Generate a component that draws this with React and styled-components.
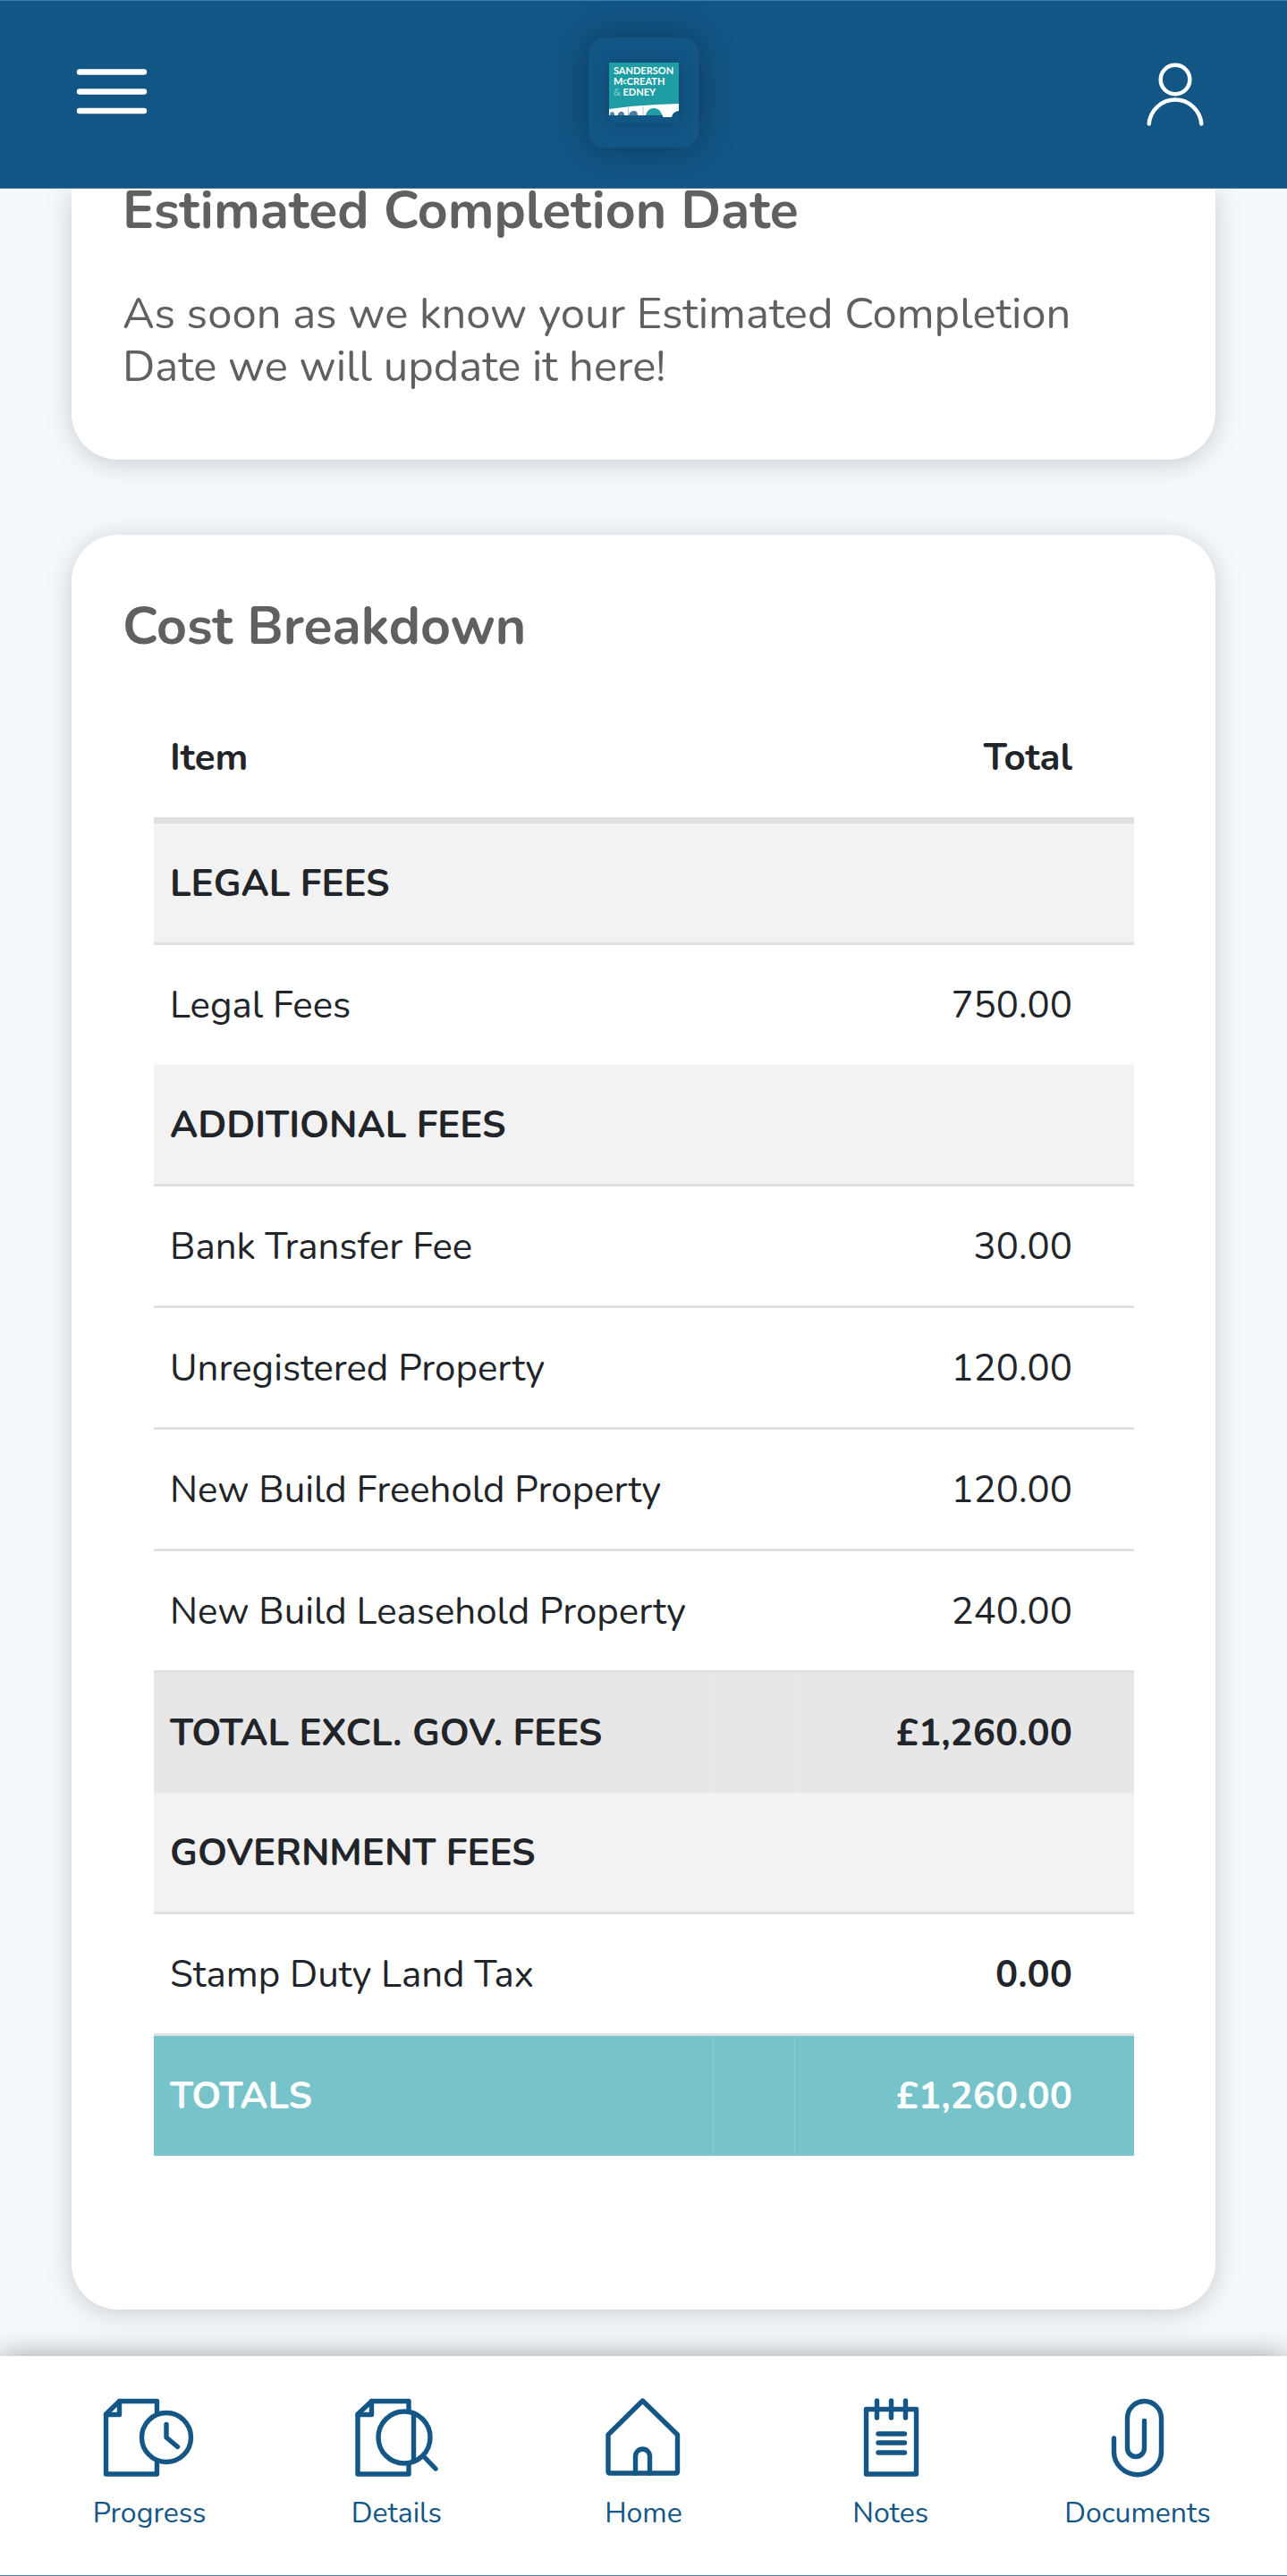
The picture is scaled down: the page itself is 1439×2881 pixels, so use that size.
import React from "react";
import styled, { createGlobalStyle, css } from "styled-components";

const GlobalStyle = createGlobalStyle`
  * {
    box-sizing: border-box;
  }
  body {
    margin: 0;
    background: #f5f9fc;
    font-family: Nunito, Lato, "Open Sans", sans-serif;
  }
`;

const Page = styled.div`
  display: flex;
  flex-direction: column;
  min-height: 100vh;
`;

const Header = styled.header`
  display: flex;
  align-items: center;
  justify-content: space-between;
  height: 211px;
  padding: 0 80px 5px;
  background: #125686;
  border-top: 1px solid #3f7cab;
  border-bottom: 1px solid #3f7499;
  position: sticky;
  top: 0;
  z-index: 2;
`;

const IconButton = styled.button`
  display: flex;
  width: 90px;
  height: 90px;
  padding: 0;
  border: 0;
  background: none;
  color: #ffffff;
`;

const LogoTile = styled.a`
  display: flex;
  align-items: center;
  justify-content: center;
  width: 123px;
  height: 123px;
  border-radius: 18px;
  background: #125686;
  box-shadow: 0 0 40px rgba(0, 0, 0, 0.32);

  svg {
    box-shadow: 0 0 18px rgba(0, 0, 0, 0.2);
  }
`;

const Main = styled.main`
  flex: 1;
  display: flex;
  flex-direction: column;
  gap: 84px;
  padding: 0 80px 52px;
`;

const Card = styled.section`
  padding: ${({ $scrolled }) => ($scrolled ? "0 57px 75px" : "78px 57px 78px")};
  border-radius: ${({ $scrolled }) => ($scrolled ? "0 0 52px 52px" : "52px")};
  background: #ffffff;
  box-shadow: 0 4px 30px rgba(0, 0, 0, 0.18);
`;

const CardTitle = styled.h2`
  margin: 0;
  font-size: 59px;
  font-weight: bold;
  line-height: 50px;
  color: #606060;
`;

const CardText = styled.p`
  margin: 60px 0 0;
  font-size: 49px;
  line-height: 59px;
  color: #606060;
`;

const TableWrap = styled.div`
  padding: 54px 34px 94px 35px;
`;

const CostTable = styled.table`
  width: 100%;
  table-layout: fixed;
  border-spacing: 0;
  font-size: 42px;
  line-height: 54px;
  color: #212429;

  th,
  td {
    height: 134px;
    padding: 2px 0 0 18px;
    text-align: left;
    font-weight: inherit;
  }
  th:last-child,
  td:last-child {
    padding-right: 69px;
    text-align: right;
  }
  thead th {
    height: 141px;
    border-bottom: 7px solid #e0e0e2;
    font-weight: bold;
  }
`;

const ItemCol = styled.col`
  width: 57%;
`;

const SpacerCol = styled.col`
  width: 91px;
`;

const rowKinds = {
  section: css`
    background: #f2f2f3;
    font-weight: bold;
  `,
  subtotal: css`
    background: #e7e7e7;
    font-weight: bold;
    td {
      border-left: 1px solid #ebebeb;
    }
  `,
  total: css`
    background: #76c3c9;
    color: #ffffff;
    font-weight: bold;
    td {
      border-left: 1px solid #8bccd2;
    }
  `,
};

const Row = styled.tr`
  ${({ $kind }) => rowKinds[$kind]}

  ${({ $line }) =>
    $line &&
    css`
      && th,
      && td {
        height: 136px;
        border-bottom: 3px solid #dfe0e3;
      }
    `}
`;

const Amount = styled.td`
  && {
    font-weight: ${({ $bold }) => ($bold ? "bold" : "inherit")};
  }
`;

const Nav = styled.nav`
  display: grid;
  grid-template-columns: repeat(5, 1fr);
  height: 246px;
  padding: 45px 29px 0;
  background: #ffffff;
  border-bottom: 1px solid #4b82ab;
  box-shadow: 0 0 30px rgba(0, 0, 0, 0.36);
  position: sticky;
  bottom: 0;
`;

const NavLink = styled.a`
  display: flex;
  flex-direction: column;
  align-items: center;
  gap: 19px;
  font-size: 32px;
  line-height: 40px;
  text-decoration: none;
  color: #145685;
`;

const MenuIcon = () => (
  <svg width="90" height="90" viewBox="0 0 90 90" fill="none" stroke="currentColor" strokeWidth="6.4" strokeLinecap="round">
    <path d="M9 22.500H81M9 44.500H81M9 66H81" />
  </svg>
);

const UserIcon = () => (
  <svg width="90" height="90" viewBox="0 0 90 90" fill="none" stroke="currentColor" strokeWidth="4.500" strokeLinecap="round">
    <circle cx="45" cy="31" r="16.300" />
    <path d="M15.700 80.500a29.400 29.400 0 0 1 58.600 0" />
  </svg>
);

const Logo = () => (
  <svg width="78" height="67" viewBox="0 0 78 67">
    <rect width="78" height="67" fill="#125686" />
    <path d="M0 0H78V52H0Z" fill="#1f9da4" />
    <path d="M0 52L24 49L52 47L78 46V54Q71 55 70 61H60V59H0Z" fill="#ffffff" />
    <path d="M1 59V57Q4 53 6 57V59ZM10 59V57Q14 52 17 57V59ZM22 59Q23 54 28 54Q32 54 32 59Z" fill="#4f7f9f" />
    <path d="M41 59Q43 51 50 51Q57 51 60 60L50 60Z" fill="#1f9da4" />
    <path d="M0 59H39L60 59V61H70V67H0Z" fill="#125686" />
    <path d="M21.500 50V59M38 49V59" stroke="#b8c4cc" strokeWidth="1" />
    <g fill="#ffffff" fontFamily="Lato, sans-serif" fontWeight="bold" fontSize="11">
      <text x="5" y="13">SANDERSON</text>
      <text x="5" y="25">
        M<tspan fontSize="9" dy="-1">c</tspan>
        <tspan dy="1">CREATH</tspan>
      </text>
      <text x="5" y="37">
        <tspan fontWeight="normal" fill="#8fd0d2">&amp;</tspan> EDNEY
      </text>
    </g>
  </svg>
);

const NavIcon = ({ children }) => (
  <svg width="104" height="92" viewBox="0 0 104 92" fill="none" stroke="currentColor" strokeWidth="5.400" strokeLinecap="round" strokeLinejoin="round" aria-hidden="true">
    {children}
  </svg>
);

const links = [
  {
    label: "Progress",
    icon: (
      <>
        <path d="M60.500 18V5.500H18.500L3.500 20V87H60.500V74" />
        <path d="M18.500 5.500V20.500H3.500" />
        <circle cx="71" cy="46" r="27.500" />
        <path d="M71 31.500V46L83.500 56.500" />
      </>
    ),
  },
  {
    label: "Details",
    icon: (
      <>
        <path d="M66 16V5.500H24.500L9 20V87H66V76" />
        <path d="M24.500 5.500V20.500H9" />
        <circle cx="61" cy="46" r="29" />
        <path d="M71.500 20V72M83 67.500L96 81" />
      </>
    ),
  },
  {
    label: "Home",
    icon: (
      <>
        <path d="M51.500 5L13 43V84Q13 86 15 86H88.500Q90.500 86 90.500 84V43Z" />
        <path d="M43.500 86V67a8 8 0 0 1 16 0V86" />
      </>
    ),
  },
  {
    label: "Notes",
    icon: (
      <>
        <path d="M24.500 14.500H80.500V87H24.500Z" />
        <path d="M36.500 5V24M52.500 5V24M68.500 5V24" />
        <path d="M38 42H67.500M38 52H67.500M38 63H67.500" />
      </>
    ),
  },
  {
    label: "Documents",
    icon: (
      <path d="M25.500 47V62a26.500 25.700 0 0 0 53 0V24.500a19 19 0 0 0 -38 0V58a9.500 9.500 0 0 0 19 0V27.500" />
    ),
  },
];

const costs = [
  { item: "LEGAL FEES", kind: "section", line: true },
  { item: "Legal Fees", total: "750.00" },
  { item: "ADDITIONAL FEES", kind: "section", line: true },
  { item: "Bank Transfer Fee", total: "30.00", line: true },
  { item: "Unregistered Property", total: "120.00", line: true },
  { item: "New Build Freehold Property", total: "120.00", line: true },
  { item: "New Build Leasehold Property", total: "240.00", line: true },
  { item: "TOTAL EXCL. GOV. FEES", total: "£1,260.00", kind: "subtotal" },
  { item: "GOVERNMENT FEES", kind: "section", line: true },
  { item: "Stamp Duty Land Tax", total: "0.00", bold: true, line: true },
  { item: "TOTALS", total: "£1,260.00", kind: "total" },
];

const CostRow = ({ item, total, kind, line, bold }) => (
  <Row $kind={kind} $line={line}>
    <th scope="row">{item}</th>
    <td />
    <Amount $bold={bold || kind}>{total}</Amount>
  </Row>
);

export default function App() {
  return (
    <Page>
      <GlobalStyle />
      <Header>
        <IconButton type="button" aria-label="Menu">
          <MenuIcon />
        </IconButton>
        <LogoTile href="#" aria-label="Sanderson McCreath & Edney">
          <Logo />
        </LogoTile>
        <IconButton type="button" aria-label="Account">
          <UserIcon />
        </IconButton>
      </Header>
      <Main>
        <Card $scrolled>
          <CardTitle>Estimated Completion Date</CardTitle>
          <CardText>
            As soon as we know your Estimated Completion Date we will update it
            here!
          </CardText>
        </Card>
        <Card>
          <CardTitle>Cost Breakdown</CardTitle>
          <TableWrap>
            <CostTable>
              <colgroup>
                <ItemCol />
                <SpacerCol />
                <col />
              </colgroup>
              <thead>
                <tr>
                  <th scope="col">Item</th>
                  <th />
                  <th scope="col">Total</th>
                </tr>
              </thead>
              <tbody>
                {costs.map((cost) => (
                  <CostRow key={cost.item} {...cost} />
                ))}
              </tbody>
            </CostTable>
          </TableWrap>
        </Card>
      </Main>
      <Nav>
        {links.map(({ label, icon }) => (
          <NavLink key={label} href="#">
            <NavIcon>{icon}</NavIcon>
            {label}
          </NavLink>
        ))}
      </Nav>
    </Page>
  );
}
